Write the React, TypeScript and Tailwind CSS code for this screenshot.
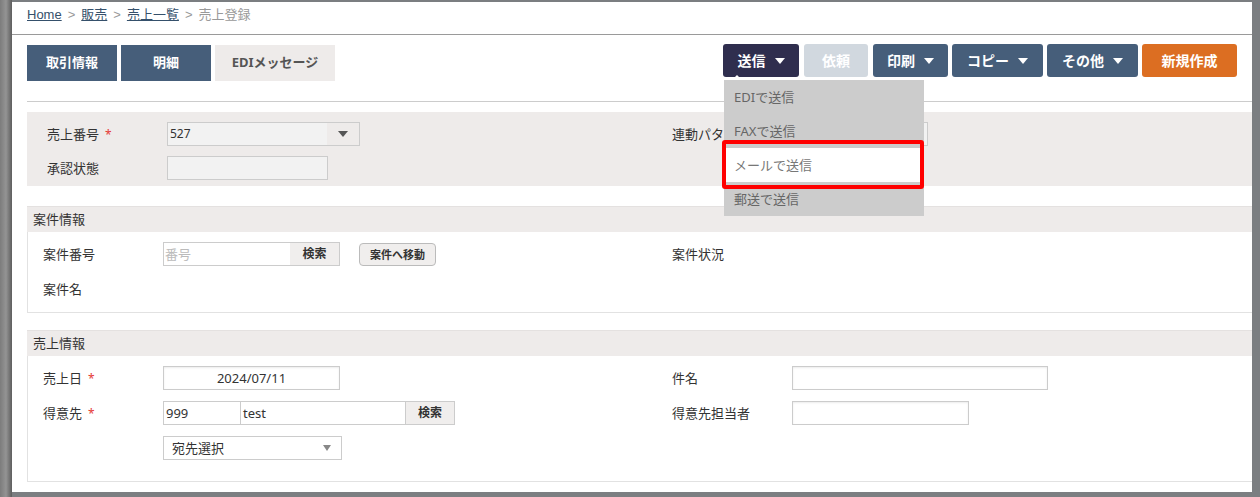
import React from 'react';

const jp = "font-['Noto_Sans','Noto_Sans_CJK_JP',sans-serif]";

function Caret({ color = 'border-t-white' }: { color?: string }) {
  return <span className={`inline-block w-0 h-0 border-l-[5px] border-r-[5px] border-t-[6px] border-l-transparent border-r-transparent ${color}`} />;
}

function ActionButton({ label, width, caret, className }: { label: string; width: string; caret?: boolean; className: string }) {
  return (
    <button className={`${width} h-[33px] rounded-[3px] flex items-center justify-center gap-[9px] text-[14px] font-bold text-white leading-none ${className}`}>
      <span>{label}</span>
      {caret && <Caret />}
    </button>
  );
}

function Label({ text, required, width = 'w-[120px]' }: { text: string; required?: boolean; width?: string }) {
  return (
    <div className={`${width} shrink-0 text-[13px] leading-[18px] text-[#333]`}>
      {text}
      {required && <span className="text-[#e53935] ml-[6px] text-[12px]">*</span>}
    </div>
  );
}

const inputBase = 'h-[24px] border border-[#cccccc] text-[13px] leading-[22px] text-[#333] px-[6px]';
const inputShadow = 'shadow-[inset_0_1px_2px_rgba(0,0,0,0.08)]';

function SectionHeader({ title }: { title: string }) {
  return (
    <div className="h-[26px] bg-[#eeebea] border-t border-[#e4e1e0] pl-[6px] text-[13px] leading-[24px] text-[#333]">
      {title}
    </div>
  );
}

function SendMenu() {
  const items = ['EDIで送信', 'FAXで送信', 'メールで送信', '郵送で送信'];
  return (
    <div className="absolute left-[1px] top-[36px] w-[200px] bg-[#cccccc] z-10">
      <span className="absolute -top-[5px] left-[8px] w-0 h-0 border-l-[5px] border-r-[5px] border-b-[5px] border-l-transparent border-r-transparent border-b-white" />
      {items.map((item, i) => (
        <div
          key={item}
          className={`h-[34px] pl-[10px] text-[13px] leading-[34px] ${i === 2 ? 'bg-white text-[#777]' : 'text-[#666]'}`}
        >
          {item}
        </div>
      ))}
      {/* annotation frame */}
      <div className="absolute -left-[2px] top-[60px] w-[202px] h-[49px] border-4 border-[#ff0000] rounded-[3px]" />
    </div>
  );
}

export default function App() {
  return (
    <div className={`w-[1260px] h-[497px] flex bg-[#7b7e81] overflow-hidden ${jp}`}>
      <div className="w-[12px] shrink-0 bg-linear-to-r from-[#7c7c7c] via-[#949494] to-[#5e5e5e]" />
      <div className="w-[1240px] mt-[2px] mb-[5px] bg-white relative">
        {/* Breadcrumb */}
        <div className="h-[33px] border-b border-[#9a9a9a] pl-[15px] pt-[5px] text-[13px] leading-[16px] font-['Liberation_Sans','Noto_Sans_CJK_JP',sans-serif]">
          <a className="text-[#35506b] underline">Home</a>
          <span className="text-[#999] mx-[6px]">&gt;</span>
          <a className="text-[#35506b] underline">販売</a>
          <span className="text-[#999] mx-[6px]">&gt;</span>
          <a className="text-[#35506b] underline">売上一覧</a>
          <span className="text-[#999] mx-[6px]">&gt;</span>
          <span className="text-[#999]">売上登録</span>
        </div>

        <div className="pl-[15px]">
          {/* Toolbar */}
          <div className="pt-[10px] pr-[15px] flex justify-between items-start">
            <div className="flex gap-[4px]">
              <button className="w-[90px] h-[36px] bg-[#465e7a] text-white text-[13px] font-bold">取引情報</button>
              <button className="w-[90px] h-[36px] bg-[#465e7a] text-white text-[13px] font-bold">明細</button>
              <button className="w-[120px] h-[36px] bg-[#eeebea] text-[#555] text-[13px] font-bold">EDIメッセージ</button>
            </div>
            <div className="flex gap-[4px] -mt-[1px]">
              <div className="relative">
                <ActionButton label="送信" width="w-[76px]" caret className="bg-[#2f2e4e]" />
                <SendMenu />
              </div>
              <ActionButton label="依頼" width="w-[64px] ml-[1px]" className="bg-[#d1d8df]" />
              <ActionButton label="印刷" width="w-[75px] ml-[1px]" caret className="bg-[#465e7a]" />
              <ActionButton label="コピー" width="w-[91px]" caret className="bg-[#465e7a]" />
              <ActionButton label="その他" width="w-[91px]" caret className="bg-[#465e7a]" />
              <ActionButton label="新規作成" width="w-[95px]" className="bg-[#dc6e22]" />
            </div>
          </div>

          <div className="mt-[20px] border-b border-[#cccccc]" />

          {/* Section 1 */}
          <div className="mt-[10px] h-[74px] bg-[#eeebea] pl-[20px] pt-[10px] flex">
            <div className="w-[625px] flex flex-col gap-[10px]">
              <div className="flex items-center">
                <Label text="売上番号" required />
                <div className="w-[193px] h-[24px] border border-[#cccccc] bg-[#f2f2f2] flex">
                  <div className="flex-1 text-[12px] leading-[22px] text-[#333] pl-[2px]">527</div>
                  <div className="w-[32px] bg-[#eeebea] flex items-center justify-center">
                    <Caret color="border-t-[#555]" />
                  </div>
                </div>
              </div>
              <div className="flex items-center">
                <Label text="承認状態" />
                <div className="w-[161px] h-[24px] border border-[#cccccc] bg-[#f2f2f2]" />
              </div>
            </div>
            <div className="flex items-center h-[24px]">
              {/* label runs under the open menu; clip it at the menu edge */}
              <div className="w-[120px] shrink-0 text-[13px] leading-[18px] text-[#333]">
                <span className="inline-block w-[52px] overflow-hidden whitespace-nowrap align-top">連動パターン</span>
              </div>
              <div className="w-[136px] h-[24px] border border-[#cccccc] bg-[#f2f2f2]" />
            </div>
          </div>

          {/* Section 2 */}
          <div className="mt-[20px]">
            <SectionHeader title="案件情報" />
            <div className="h-[81px] border border-t-0 border-r-0 border-[#e2e2e2] pl-[15px] pt-[10px] flex">
              <div className="w-[629px] flex flex-col gap-[11px]">
                <div className="flex items-center">
                  <Label text="案件番号" />
                  <div className="flex border border-[#cccccc] h-[24px] w-[177px]">
                    <div className="flex-1 text-[13px] leading-[22px] text-[#bbb] pl-[1px]">番号</div>
                    <div className="w-[49px] bg-[#f0eeed] text-[12px] font-bold leading-[22px] text-[#333] text-center">検索</div>
                  </div>
                  <button className="ml-[19px] w-[77px] h-[23px] rounded-[4px] border border-[#bbbbbb] bg-[#f0eeed] text-[11px] font-bold text-[#333] leading-none">案件へ移動</button>
                </div>
                <div className="flex items-center h-[24px]">
                  <Label text="案件名" />
                </div>
              </div>
              <div className="flex items-center h-[24px]">
                <Label text="案件状況" />
              </div>
            </div>
          </div>

          {/* Section 3 */}
          <div className="mt-[17px]">
            <SectionHeader title="売上情報" />
            <div className="h-[126px] border border-t-0 border-r-0 border-[#e2e2e2] pl-[15px] pt-[10px] flex">
              <div className="w-[629px] flex flex-col gap-[11px]">
                <div className="flex items-center">
                  <Label text="売上日" required />
                  <div className={`${inputBase} ${inputShadow} w-[177px] text-center`}>2024/07/11</div>
                </div>
                <div className="flex items-center">
                  <Label text="得意先" required />
                  <div className="flex h-[24px] border border-[#cccccc]">
                    <div className="w-[77px] border-r border-[#cccccc] text-[13px] leading-[22px] text-[#333] pl-[2px]">999</div>
                    <div className="w-[165px] border-r border-[#cccccc] text-[13px] leading-[22px] text-[#333] pl-[2px]">test</div>
                    <div className="w-[48px] bg-[#f0eeed] text-[12px] font-bold leading-[22px] text-[#333] text-center">検索</div>
                  </div>
                </div>
                <div className="flex items-center">
                  <Label text="" />
                  <div className="w-[179px] h-[24px] border border-[#cccccc] flex items-center justify-between pl-[8px] pr-[10px]">
                    <span className="text-[13px] text-[#333] leading-none">宛先選択</span>
                    <span className="inline-block w-0 h-0 border-l-[4px] border-r-[4px] border-t-[6px] border-l-transparent border-r-transparent border-t-[#888]" />
                  </div>
                </div>
              </div>
              <div className="flex flex-col gap-[11px]">
                <div className="flex items-center">
                  <Label text="件名" />
                  <div className={`${inputBase} ${inputShadow} w-[256px]`} />
                </div>
                <div className="flex items-center">
                  <Label text="得意先担当者" />
                  <div className={`${inputBase} ${inputShadow} w-[177px]`} />
                </div>
              </div>
            </div>
          </div>
        </div>
      </div>
    </div>
  );
}
